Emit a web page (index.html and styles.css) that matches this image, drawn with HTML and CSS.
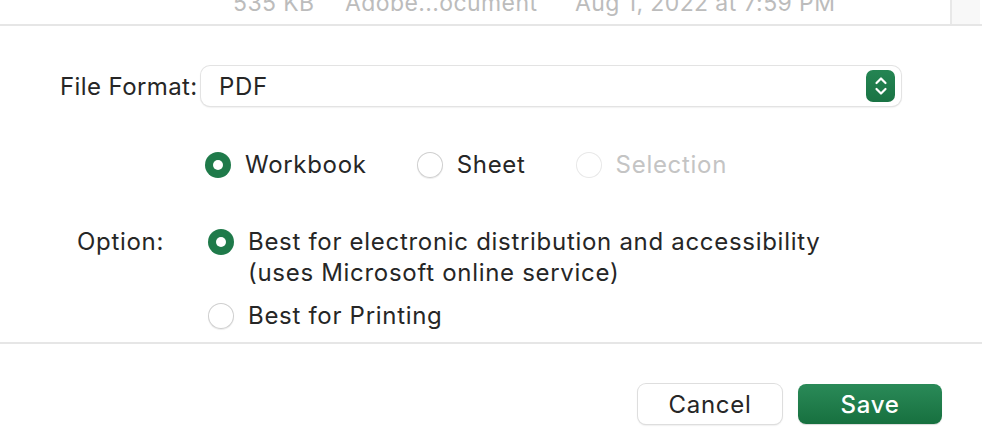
FILE: index.html
```html
<!DOCTYPE html>
<html lang="en">
<head>
    <meta charset="UTF-8">
    <meta name="viewport" content="width=device-width, initial-scale=1.0">
    <title>Save As PDF</title>
    <link rel="stylesheet" href="styles.css">
</head>
<body>
    <div class="dialog">
        <div class="file-list">
            <div class="file-row">
                <span class="col-size">535 KB</span>
                <span class="col-kind">Adobe...ocument</span>
                <span class="col-date">Aug 1, 2022 at 7:59 PM</span>
            </div>
            <div class="scroll-track"></div>
        </div>

        <div class="format-row">
            <label class="field-label">File Format:</label>
            <div class="popup">
                <span class="popup-value">PDF</span>
                <span class="stepper">
                    <svg width="14" height="22" viewBox="0 0 14 22">
                        <path d="M2.5 8 L7 3.5 L11.5 8" fill="none" stroke="#fff" stroke-width="2.2" stroke-linecap="round" stroke-linejoin="round"/>
                        <path d="M2.5 14 L7 18.5 L11.5 14" fill="none" stroke="#fff" stroke-width="2.2" stroke-linecap="round" stroke-linejoin="round"/>
                    </svg>
                </span>
            </div>
        </div>

        <div class="scope-row">
            <div class="radio-item">
                <span class="radio checked"></span>
                <span class="radio-text">Workbook</span>
            </div>
            <div class="radio-item">
                <span class="radio"></span>
                <span class="radio-text">Sheet</span>
            </div>
            <div class="radio-item disabled">
                <span class="radio"></span>
                <span class="radio-text">Selection</span>
            </div>
        </div>

        <div class="option-row">
            <div class="field-label option-label">Option:</div>
            <div class="option-list">
                <div class="radio-item top">
                    <span class="radio checked"></span>
                    <span class="radio-text">Best for electronic distribution and accessibility<br>(uses Microsoft online service)</span>
                </div>
                <div class="radio-item">
                    <span class="radio"></span>
                    <span class="radio-text">Best for Printing</span>
                </div>
            </div>
        </div>

        <div class="footer">
            <button class="btn">Cancel</button>
            <button class="btn primary">Save</button>
        </div>
    </div>
</body>
</html>
```

FILE: styles.css
```css
* {
    margin: 0;
    padding: 0;
    box-sizing: border-box;
}

body {
    font-family: 'Inter', 'Noto Sans', sans-serif;
    background: #fff;
    color: #262626;
    font-size: 24px;
    letter-spacing: 0.7px;
    width: 982px;
    height: 446px;
    overflow: hidden;
}

.file-list {
    display: flex;
    height: 26px;
    border-bottom: 2px solid #e6e6e6;
    overflow: hidden;
}

.file-row {
    flex: 1;
    display: flex;
    padding-left: 233px;
    margin-top: -10px;
    color: #bcbcbc;
    font-size: 23px;
    letter-spacing: 0.4px;
    line-height: 26px;
    white-space: nowrap;
}

.col-size {
    width: 112px;
}

.col-kind {
    width: 230px;
}

.scroll-track {
    width: 30px;
    margin-right: 2px;
    background: #f8f8f8;
    border-left: 2px solid #e8e8e8;
}

.format-row {
    display: flex;
    align-items: center;
    margin-top: 40px;
    padding-left: 60px;
}

.field-label {
    color: #262626;
    white-space: nowrap;
}

.format-row .field-label {
    width: 141px;
    flex-shrink: 0;
    letter-spacing: 0.4px;
}

.popup {
    width: 700px;
    height: 40px;
    flex-shrink: 0;
    display: flex;
    align-items: center;
    justify-content: space-between;
    padding: 0 6px 0 18px;
    border-radius: 9px;
    background: #fff;
    box-shadow: 0 0 0 1px #e3e3e3, 0 1px 2px rgba(0, 0, 0, 0.18);
}

.stepper {
    width: 29px;
    height: 32px;
    border-radius: 7px;
    background: linear-gradient(#248553, #1a7344);
    display: flex;
    align-items: center;
    justify-content: center;
}

.scope-row {
    display: flex;
    gap: 50px;
    margin-top: 43px;
    padding-left: 205px;
}

.radio-item {
    display: flex;
    align-items: center;
    gap: 14px;
}

.radio-item.top {
    align-items: flex-start;
}

.radio {
    width: 26px;
    height: 26px;
    flex-shrink: 0;
    border-radius: 50%;
    background: #fff;
    box-shadow: inset 0 0 0 1px #cfcfcf, 0 1px 1px rgba(0, 0, 0, 0.08);
}

.radio.checked {
    background: #1f7a4a;
    box-shadow: none;
    position: relative;
}

.radio.checked::after {
    content: '';
    position: absolute;
    left: 8px;
    top: 8px;
    width: 10px;
    height: 10px;
    border-radius: 50%;
    background: #fff;
}

.radio-item.top .radio {
    margin-top: 3px;
}

.radio-text {
    line-height: 31px;
}

.disabled .radio {
    box-shadow: inset 0 0 0 1px #e8e8e8;
}

.disabled .radio-text {
    color: #c4c4c4;
}

.option-row {
    display: flex;
    margin-top: 46px;
    padding-left: 77px;
}

.option-label {
    width: 131px;
    line-height: 31px;
}

.option-list {
    display: flex;
    flex-direction: column;
    gap: 12px;
}

.footer {
    display: flex;
    justify-content: flex-end;
    gap: 16px;
    margin-top: 11px;
    padding: 40px 40px 0 0;
    border-top: 2px solid #e6e6e6;
}

.btn {
    width: 144px;
    height: 40px;
    border: none;
    border-radius: 8px;
    font-family: inherit;
    font-size: 24px;
    letter-spacing: 0.7px;
    color: #262626;
    background: #fff;
    box-shadow: 0 0 0 1px #dedede, 0 1px 2px rgba(0, 0, 0, 0.2);
}

.btn.primary {
    color: #fff;
    font-weight: 500;
    background: linear-gradient(#2a8a58, #17703f);
    box-shadow: 0 1px 1px rgba(0, 0, 0, 0.15);
}
```
